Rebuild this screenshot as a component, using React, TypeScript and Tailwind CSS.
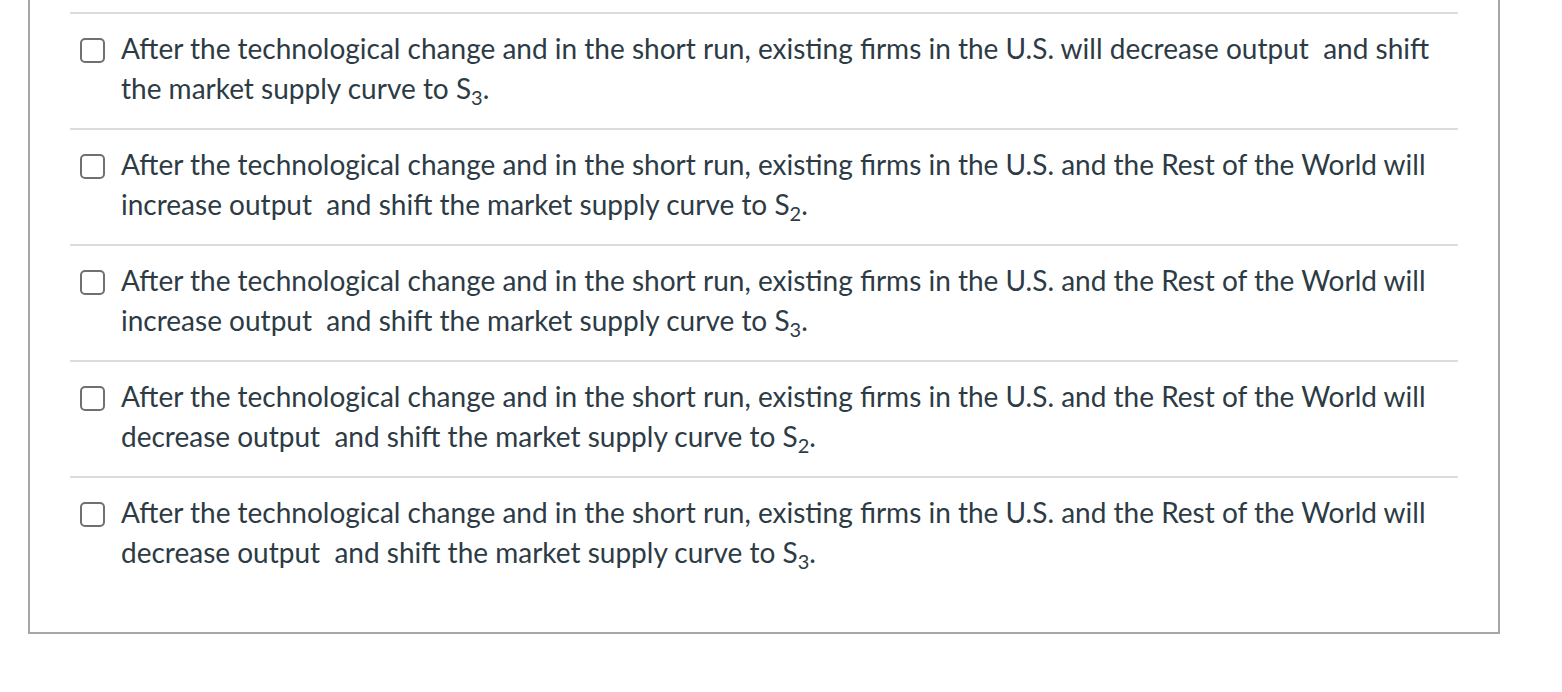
import React from "react";

const options: { text: string; sub: string }[] = [
  {
    text: "After the technological change and in the short run, existing firms in the U.S. will decrease output\u00a0 and shift the market supply curve to S",
    sub: "3",
  },
  {
    text: "After the technological change and in the short run, existing firms in the U.S. and the Rest of the World will increase output\u00a0 and shift the market supply curve to S",
    sub: "2",
  },
  {
    text: "After the technological change and in the short run, existing firms in the U.S. and the Rest of the World will increase output\u00a0 and shift the market supply curve to S",
    sub: "3",
  },
  {
    text: "After the technological change and in the short run, existing firms in the U.S. and the Rest of the World will decrease output\u00a0 and shift the market supply curve to S",
    sub: "2",
  },
  {
    text: "After the technological change and in the short run, existing firms in the U.S. and the Rest of the World will decrease output\u00a0 and shift the market supply curve to S",
    sub: "3",
  },
];

export default function App() {
  return (
    <div className="w-[1562px] h-[692px] bg-white font-['Lato','Liberation_Sans',sans-serif]">
      <div className="ml-[28px] w-[1472px] h-[634px] border-x-2 border-b-2 border-[#a6a6a6] px-[40px] pt-[12px]">
        {options.map((o, i) => (
          <div key={i} className="border-t-2 border-[#dcdcdc] h-[116px] pt-[14px] flex items-start">
            <div className="ml-[10px] mt-[10px] w-[25px] h-[25px] shrink-0 rounded-[5px] border-2 border-[#707070] bg-white" />
            <div className="ml-[16px] pr-[20px] text-[28px] leading-[40px] text-[#2d3b45]">
              {o.text}
              <span className="relative top-[6px] text-[20px]">{o.sub}</span>.
            </div>
          </div>
        ))}
      </div>
    </div>
  );
}
